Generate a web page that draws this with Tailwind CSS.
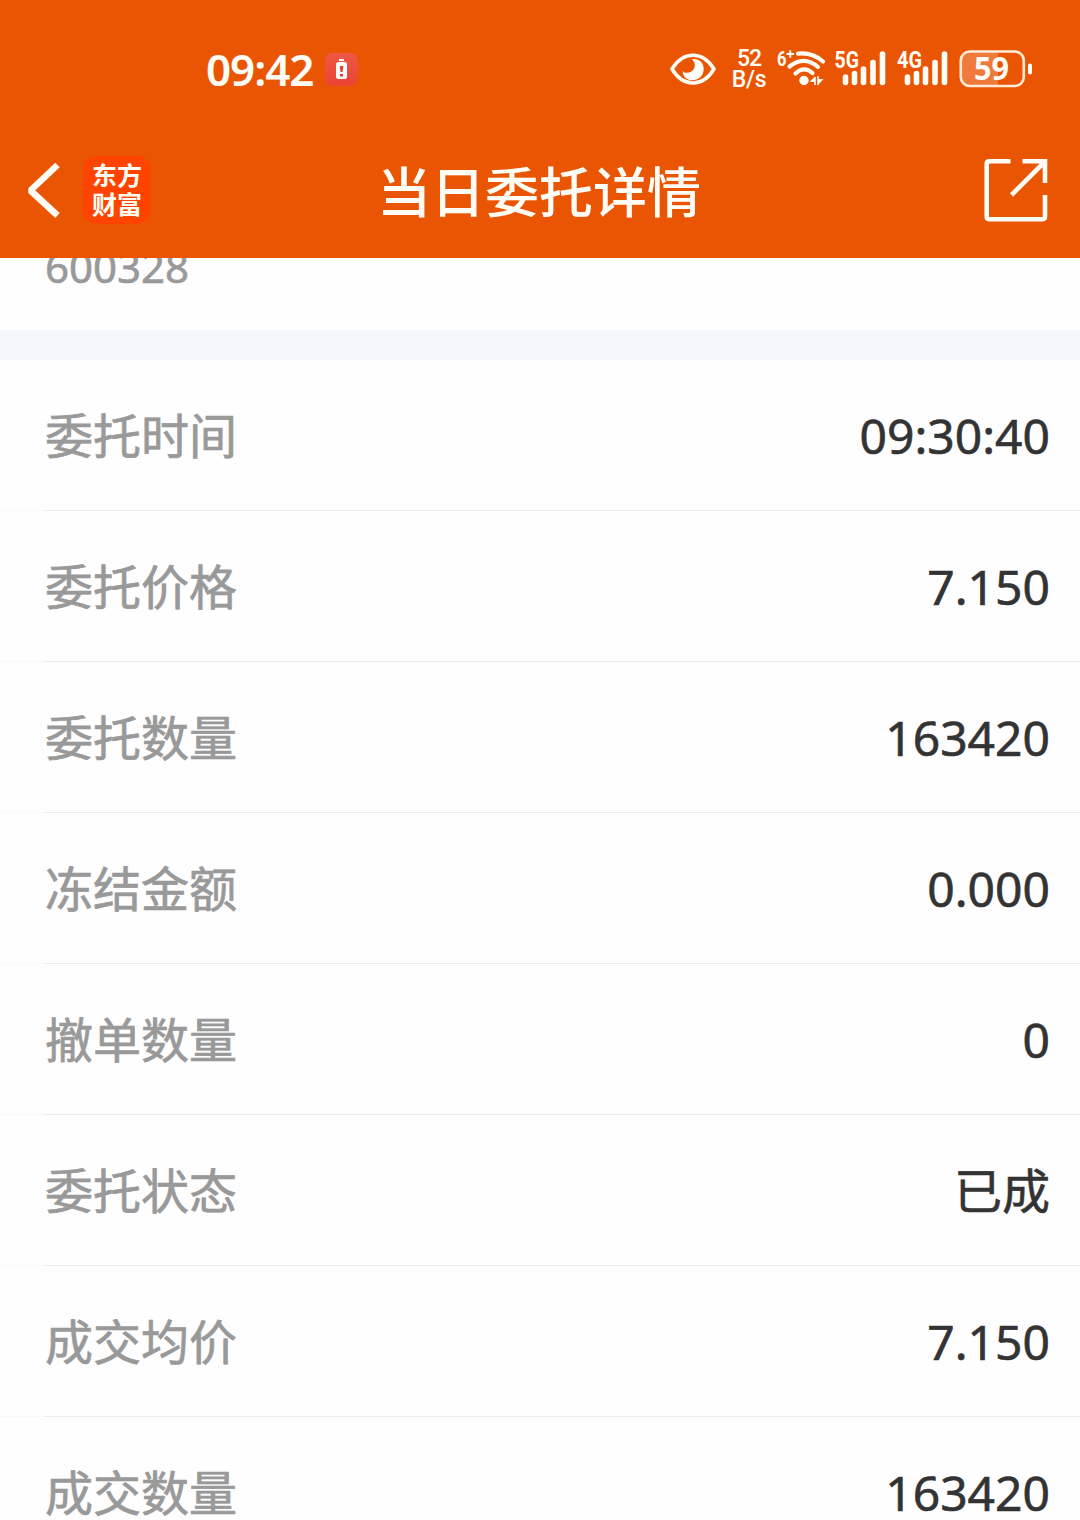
<!DOCTYPE html>
<html lang="zh-CN">

<head>
  <meta charset="UTF-8" />
  <meta name="viewport" content="width=device-width, initial-scale=1.0" />
  <title>当日委托详情</title>

  <script src="https://cdn.jsdelivr.net/npm/@tailwindcss/browser@4"></script>
</head>

<body class="bg-[#fefefe] h-[1520px] overflow-hidden flex flex-col text-[#333] font-['Noto_Sans','Noto_Sans_CJK_SC',sans-serif]">

  <!-- Header -->
  <header class="bg-[#ea5504] h-[258px] shrink-0 text-[#fffdf5]">

    <!-- Status bar -->
    <div class="h-[138px] pl-[206px] pr-[47px] flex items-center justify-between">
      <div class="flex items-center gap-[12px]">
        <span class="text-[44px] leading-[60px] font-semibold tracking-[-1.1px]">09:42</span>
        <svg class="w-[33px] h-[33px]" viewBox="0 0 33 33">
          <defs>
            <linearGradient id="alert" x1="0" y1="0" x2="0" y2="1">
              <stop offset="0" stop-color="#ee5a45" />
              <stop offset="1" stop-color="#ec4232" />
            </linearGradient>
          </defs>
          <rect width="33" height="33" rx="8" fill="url(#alert)" />
          <rect x="14" y="6" width="5" height="2" fill="#fff" />
          <rect x="11" y="9" width="11" height="17" rx="2.5" fill="#fff" />
          <path d="M14.700 13h3.600l-.8 6h-2zM15 21h3v2.500h-3z" fill="#e5402e" />
        </svg>
      </div>

      <div class="flex items-center">
        <!-- Eye -->
        <svg class="w-[46px] h-[32px]" viewBox="0 0 46 32">
          <path d="M2 16C13-2.500 33-2.500 44 16C33 34.500 13 34.500 2 16Z" fill="none" stroke="#fffdf5" stroke-width="3.500" stroke-linejoin="round" />
          <path d="M22 6.200C30 5 34 11 33.700 16.500C33 30 13 31 12.600 18C14.500 20.500 18.500 20 20.500 19C26 16 26 10 22 6.200Z" fill="#fffdf5" />
        </svg>
        <div class="ml-[15px] w-[36px] flex flex-col items-center font-[Roboto,sans-serif] font-medium text-[23px] leading-[21px]">
          <span class="tracking-[-1px]">52</span>
          <span class="tracking-[-0.2px]">B/s</span>
        </div>
        <!-- Wi-Fi -->
        <svg class="ml-[10px] w-[50px] h-[40px] overflow-visible" viewBox="0 0 50 40">
          <text x="0" y="17" font-family="Roboto" font-weight="700" font-size="21" textLength="9.500" lengthAdjust="spacingAndGlyphs" fill="#fffdf5">6</text>
          <path d="M9.500 5h7.500M13.200 1.300v7.500" stroke="#fffdf5" stroke-width="2" />
          <g fill="none" stroke="#fffdf5" stroke-width="4.200" stroke-linecap="round">
            <path d="M21 4.600Q35.500 3 46 12.500" />
            <path d="M12.500 17.500Q27 6 41 18" />
            <path d="M18.500 24.500Q27 16.500 35.500 24" />
          </g>
          <circle cx="27" cy="31.500" r="4.700" fill="#fffdf5" />
          <path d="M38 28v8M41 27v9" stroke="#fffdf5" stroke-width="1.600" />
          <path d="M38 27.500v5.500h-5.500ZM41 36v-6h5.500Z" fill="#fffdf5" />
        </svg>
        <!-- 5G -->
        <svg class="ml-[8px] w-[52px] h-[36px] overflow-visible" viewBox="0 0 52 36">
          <text x="-0.500" y="17" font-family="Roboto" font-weight="700" font-size="23.500" textLength="24.500" lengthAdjust="spacingAndGlyphs" fill="#fffdf5">5G</text>
          <g stroke="#fffdf5" stroke-width="5.600" stroke-linecap="round">
            <path d="M10.500 26V31.500M19.500 22.500V31.500M28.500 18V31.500M38 11.500V31.500M47.500 3V31.500" />
          </g>
        </svg>
        <!-- 4G -->
        <svg class="ml-[10px] w-[52px] h-[36px] overflow-visible" viewBox="0 0 52 36">
          <text x="0" y="17" font-family="Roboto" font-weight="700" font-size="23.500" textLength="25" lengthAdjust="spacingAndGlyphs" fill="#fffdf5">4G</text>
          <g stroke="#fffdf5" stroke-width="5.600" stroke-linecap="round">
            <path d="M10.500 26V31.500M19.500 22.500V31.500M28.500 18V31.500M38 11.500V31.500M47.500 3V31.500" />
          </g>
        </svg>
        <!-- Battery -->
        <svg class="ml-[10px] w-[74px] h-[38px] overflow-visible" viewBox="0 0 74 38">
          <path d="M11 2H39V36H11Q2 36 2 27V11Q2 2 11 2Z" fill="#ef7a3c" />
          <rect x="1.800" y="1.500" width="63" height="34.500" rx="9" fill="none" stroke="#ffecd8" stroke-width="2.600" />
          <rect x="69" y="13.500" width="4" height="11" rx="2" fill="#fffdf5" />
          <text x="32.500" y="30" text-anchor="middle" font-family="Noto Sans" font-weight="700" font-size="31.500" textLength="35" lengthAdjust="spacingAndGlyphs" fill="#fffdf5">59</text>
        </svg>
      </div>
    </div>

    <!-- Title bar -->
    <div class="h-[104px] grid grid-cols-[1fr_auto_1fr] items-center pl-[26px] pr-[31px]">
      <div class="flex items-center gap-[23px]">
        <svg class="w-[34px] h-[56px]" viewBox="0 0 34 56">
          <path d="M31.500 3L4.500 28.500L31.500 53.500" fill="none" stroke="#fffdf5" stroke-width="6.500" stroke-linejoin="bevel" />
        </svg>
        <div class="w-[68px] h-[68px] rounded-[14px] bg-[#ff4400] flex flex-col items-center justify-center pb-[3px] font-['Noto_Sans_CJK_SC',sans-serif] font-bold text-[25px] leading-[29px]">
          <span>东方</span>
          <span>财富</span>
        </div>
      </div>
      <h1 class="text-[54px] leading-[80px] font-medium font-['Noto_Sans_CJK_SC',sans-serif] ml-[3px]">当日委托详情</h1>
      <svg class="justify-self-end w-[65px] h-[64px]" viewBox="0 0 65 64">
        <g fill="none" stroke="#fffdf5" stroke-width="4.600">
          <path d="M26.500 3.300H5.500Q2.700 3.300 2.700 6V58.500Q2.700 61.300 5.500 61.300H58Q61 61.300 61 58.500V37" />
          <path d="M38.500 3.300H61V25M60.500 4L27.500 37" />
        </g>
      </svg>
    </div>
  </header>

  <!-- Stock code, scrolled partly under the header -->
  <section class="h-[72px] shrink-0 overflow-hidden pl-[45px] flex items-end pb-[33px]">
    <span class="text-[42px] leading-[60px] text-[#999] [-webkit-text-stroke:0.6px]">600328</span>
  </section>

  <div class="h-[30px] shrink-0 bg-[#f6f7f9]"></div>

  <!-- Order details -->
  <main id="details"></main>

  <script>
    const rows = [
      ['委托时间', '09:30:40'],
      ['委托价格', '7.150'],
      ['委托数量', '163420'],
      ['冻结金额', '0.000'],
      ['撤单数量', '0'],
      ['委托状态', '已成'],
      ['成交均价', '7.150'],
      ['成交数量', '163420'],
    ];

    document.getElementById('details').innerHTML = rows.map(([label, value]) => `
      <div class="h-[151px] flex flex-col">
        <div class="flex-1 flex items-center justify-between pl-[45px] pr-[30px] text-[48px] leading-[70px]">
          <span class="pb-[4px] text-[#999] font-['Noto_Sans_CJK_SC',sans-serif] [-webkit-text-stroke:0.7px]">${label}</span>
          <span class="pt-[2px] [-webkit-text-stroke:0.6px]">${value}</span>
        </div>
        <div class="flex h-px">
          <div class="w-[45px] bg-[#f8f8f8]"></div>
          <div class="flex-1 bg-[#ebebeb]"></div>
        </div>
      </div>
    `).join('');
  </script>
</body>

</html>
